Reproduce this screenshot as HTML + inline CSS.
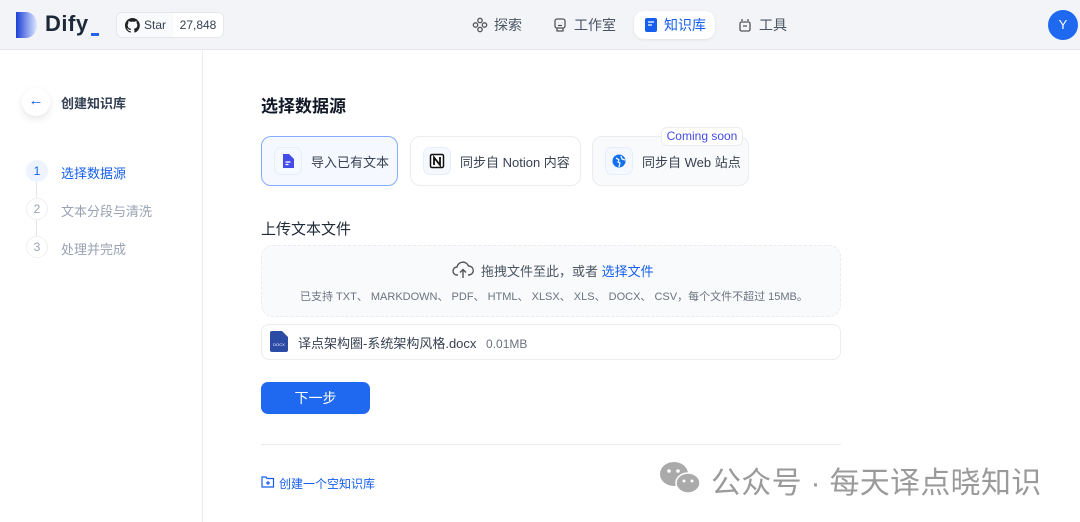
<!DOCTYPE html>
<html><head><meta charset="utf-8"><style>
*{box-sizing:border-box;margin:0;padding:0}
body{width:1080px;height:522px;overflow:hidden;background:#fff;font-family:"Liberation Sans","Noto Sans CJK SC",sans-serif;position:relative;color:#1f2937}
.abs{position:absolute}
#hdr{left:0;top:0;width:1080px;height:50px;background:#f2f4f7;border-bottom:1px solid #e5e7eb}
.nav{top:11px;height:28px;display:flex;align-items:center;font-size:14px;color:#4b5563;gap:6px}
.card{top:136px;height:50px;border:1px solid #eaecf0;border-radius:10px;background:#fff;display:flex;align-items:center;padding-left:12px;font-size:13px;color:#374151;white-space:nowrap}
.ic{width:28px;height:28px;border:1px solid #e6eefc;border-radius:7px;background:#f5f8ff;display:flex;align-items:center;justify-content:center;margin-right:9px;flex:none}
</style></head><body>
<div id="hdr" class="abs">
 <svg class="abs" style="left:16px;top:12px" width="24" height="26" viewBox="0 0 24 26"><defs><linearGradient id="g" x1="0" x2="1"><stop offset="0" stop-color="#1c3fd6"/><stop offset="1" stop-color="#dfe8ff"/></linearGradient></defs><path d="M0 0h10a11 13 0 0 1 0 26H0z" fill="url(#g)"/></svg>
 <div class="abs" style="left:45px;top:11px;font-size:22px;font-weight:bold;color:#1d2939;letter-spacing:0.5px">Dify</div>
 <div class="abs" style="left:91px;top:33px;width:8px;height:3px;background:#2563eb"></div>
 <div class="abs" style="left:116px;top:12px;width:108px;height:26px;border:1px solid #e5e7eb;border-radius:6px;background:#f9fafb;font-size:12px;color:#374151;display:flex;overflow:hidden">
  <div style="width:56px;display:flex;align-items:center;padding-left:8px;gap:4px"><svg width="15" height="15" viewBox="0 0 16 16"><path fill="#222" d="M8 0a8 8 0 0 0-2.5 15.6c.4 0 .5-.2.5-.4v-1.4c-2.2.5-2.7-1-2.7-1-.4-.9-.9-1.200-.9-1.2-.7-.5.1-.5.1-.5.8.1 1.2.8 1.2.8.7 1.2 1.900.9 2.300.7.1-.5.3-.9.5-1.1-1.800-.2-3.600-.9-3.600-4 0-.9.3-1.600.8-2.100-.1-.2-.4-1 .1-2.100 0 0 .7-.2 2.200.8a7.5 7.5 0 0 1 4 0c1.500-1 2.200-.8 2.200-.8.4 1.100.2 1.900.1 2.100.5.6.8 1.300.8 2.100 0 3.100-1.900 3.700-3.600 3.900.3.3.5.8.5 1.500v2.200c0 .2.1.5.6.4A8 8 0 0 0 8 0z"/></svg>Star</div>
  <div style="flex:1;background:#fff;display:flex;align-items:center;justify-content:center;font-size:12px">27,848</div>
 </div>
 <div class="abs nav" style="left:472px"><svg width="16" height="16" viewBox="0 0 16 16" fill="none" stroke="#555" stroke-width="1.3"><circle cx="8" cy="3.5" r="2.2"/><circle cx="8" cy="12.5" r="2.2"/><circle cx="3.5" cy="8" r="2.2"/><circle cx="12.5" cy="8" r="2.2"/></svg>探索</div>
 <div class="abs nav" style="left:552px"><svg width="16" height="16" viewBox="0 0 16 16" fill="none" stroke="#555" stroke-width="1.3"><rect x="3" y="2" width="10" height="9" rx="2"/><path d="M6 6h.1M10 6h.1M6 8.5h4M5 11v3h6v-3"/></svg>工作室</div>
 <div class="abs nav" style="left:634px;padding:0 9px 0 10px;background:#fff;border-radius:10px;box-shadow:0 1px 3px rgba(0,0,0,.08);color:#155eef"><svg width="14" height="16" viewBox="0 0 14 16"><rect x="1" y="1" width="12" height="14" rx="2" fill="#155eef"/><path d="M4 5h6M4 8h4" stroke="#fff" stroke-width="1.3"/></svg>知识库</div>
 <div class="abs nav" style="left:737px"><svg width="16" height="16" viewBox="0 0 16 16" fill="none" stroke="#555" stroke-width="1.3"><rect x="3" y="5" width="10" height="9" rx="1.5"/><path d="M5 2v2M11 2v2M6 9h4"/></svg>工具</div>
 <div class="abs" style="left:1048px;top:10px;width:30px;height:30px;border-radius:50%;background:#1f68f0;color:#fff;font-size:13px;text-align:center;line-height:30px">Y</div>
</div>
<div class="abs" style="left:202px;top:51px;width:1px;height:471px;background:#eaecf0"></div>
<div class="abs" style="left:22px;top:88px;width:28px;height:28px;border-radius:50%;background:#fff;box-shadow:0 3px 8px rgba(0,0,0,.1);color:#155eef;text-align:center;line-height:26px;font-size:15px">←</div>
<div class="abs" style="left:61px;top:93px;font-size:13px;font-weight:bold;color:#344054">创建知识库</div>
<div class="abs" style="left:36px;top:181px;width:1px;height:74px;background:#e5e7eb"></div>
<div class="abs" style="left:26px;top:160px;width:22px;height:22px;border-radius:50%;background:#eef4ff;color:#155eef;font-size:12px;text-align:center;line-height:22px">1</div>
<div class="abs" style="left:26px;top:198px;width:22px;height:22px;border-radius:50%;background:#fff;border:1px solid #f0f0f0;color:#98a2b3;font-size:12px;text-align:center;line-height:20px">2</div>
<div class="abs" style="left:26px;top:236px;width:22px;height:22px;border-radius:50%;background:#fff;border:1px solid #f0f0f0;color:#98a2b3;font-size:12px;text-align:center;line-height:20px">3</div>
<div class="abs" style="left:61px;top:163px;font-size:13px;color:#155eef">选择数据源</div>
<div class="abs" style="left:61px;top:201px;font-size:13px;color:#98a2b3">文本分段与清洗</div>
<div class="abs" style="left:61px;top:239px;font-size:13px;color:#98a2b3">处理并完成</div>

<div class="abs" style="left:261px;top:92px;font-size:17px;font-weight:bold;color:#111827">选择数据源</div>
<div class="abs card" style="left:261px;width:137px;border:1.5px solid #84adff;background:#f5f8ff"><div class="ic"><svg width="12" height="14" viewBox="0 0 12 14"><path d="M1 0h6l5 5v9H1z" fill="#444ce7"/><path d="M3.5 8h5M3.5 10.5h3" stroke="#fff" stroke-width="1.2"/></svg></div>导入已有文本</div>
<div class="abs card" style="left:410px;width:171px"><div class="ic"><svg width="16" height="16" viewBox="0 0 16 16"><rect x="1.5" y="1.5" width="13" height="13" rx="1.5" fill="#fff" stroke="#111" stroke-width="1.5"/><path d="M5 12V4.5l6 7.5V4" stroke="#111" stroke-width="1.8" fill="none"/></svg></div>同步自 Notion 内容</div>
<div class="abs card" style="left:592px;width:157px;background:#f9fafb"><div class="ic"><svg width="14" height="14" viewBox="0 0 14 14"><circle cx="7" cy="7" r="6.5" fill="#1570ef"/><path d="M4 4l3 2-1 2 2 1-1 4M9 2l1 3 3 1" stroke="#fff" stroke-width="1.2" fill="none"/></svg></div>同步自 Web 站点</div>
<div class="abs" style="left:661px;top:127px;width:82px;height:19px;border:1px solid #eaecf0;border-radius:6px;background:#fff;font-size:12px;color:#444ce7;text-align:center;line-height:17px">Coming soon</div>

<div class="abs" style="left:261px;top:218px;font-size:15px;color:#1f2937">上传文本文件</div>
<div class="abs" style="left:261px;top:245px;width:580px;height:72px;background:#f9fafb;border:1px dashed #eaecf0;border-radius:12px"></div>
<svg class="abs" style="left:452px;top:260px" width="22" height="20" viewBox="0 0 22 20" fill="none" stroke="#555" stroke-width="1.4"><path d="M6 15H5a4 4 0 0 1 0-8 6 6 0 0 1 11.5-1A4.5 4.5 0 0 1 17 15h-1"/><path d="M11 18v-8M8 12.5l3-3 3 3"/></svg>
<div class="abs" style="left:481px;top:261px;font-size:13px;color:#4b5563">拖拽文件至此，或者 <span style="color:#155eef">选择文件</span></div>
<div class="abs" style="left:300px;top:288px;font-size:11px;color:#6b7280;white-space:nowrap">已支持 TXT、 MARKDOWN、 PDF、 HTML、 XLSX、 XLS、 DOCX、 CSV，每个文件不超过 15MB。</div>
<div class="abs" style="left:261px;top:324px;width:580px;height:36px;border:1px solid #eaecf0;border-radius:8px;background:#fff"></div>
<svg class="abs" style="left:270px;top:331px" width="18" height="21" viewBox="0 0 18 21"><path d="M2 0h10l6 6v13a2 2 0 0 1-2 2H2a2 2 0 0 1-2-2V2a2 2 0 0 1 2-2z" fill="#2b4ba5"/><text x="9" y="15" font-size="4" fill="#fff" text-anchor="middle" font-family="Liberation Sans">DOCX</text></svg>
<div class="abs" style="left:298px;top:333px;font-size:13px;color:#374151">译点架构圈-系统架构风格.docx <span style="color:#6b7280;margin-left:6px;font-size:12px">0.01MB</span></div>
<div class="abs" style="left:261px;top:382px;width:109px;height:32px;background:#1f68f0;border-radius:7px;color:#fff;font-size:14px;text-align:center;line-height:32px">下一步</div>
<div class="abs" style="left:261px;top:444px;width:580px;height:1px;background:#eaecf0"></div>
<svg class="abs" style="left:261px;top:475px" width="14" height="14" viewBox="0 0 14 14" fill="none" stroke="#155eef" stroke-width="1.2"><path d="M1 2h4l1 1.5h6.5V12H1z"/><path d="M7 6v4M5 8h4"/></svg>
<div class="abs" style="left:279px;top:475px;font-size:12px;color:#155eef">创建一个空知识库</div>
<svg class="abs" style="left:659px;top:460px" width="44" height="36" viewBox="0 0 44 36"><ellipse cx="15" cy="14" rx="14" ry="12" fill="#aaa"/><ellipse cx="29" cy="23" rx="12" ry="10" fill="#aaa" stroke="#fff" stroke-width="1.5"/><circle cx="10" cy="11" r="1.8" fill="#fff"/><circle cx="19" cy="11" r="1.8" fill="#fff"/><circle cx="25" cy="21" r="1.5" fill="#fff"/><circle cx="33" cy="21" r="1.5" fill="#fff"/></svg>
<div class="abs" style="left:711px;top:458px;font-size:30px;color:#9a9a9a;white-space:nowrap;letter-spacing:0.3px">公众号 · 每天译点晓知识</div>
</body></html>
